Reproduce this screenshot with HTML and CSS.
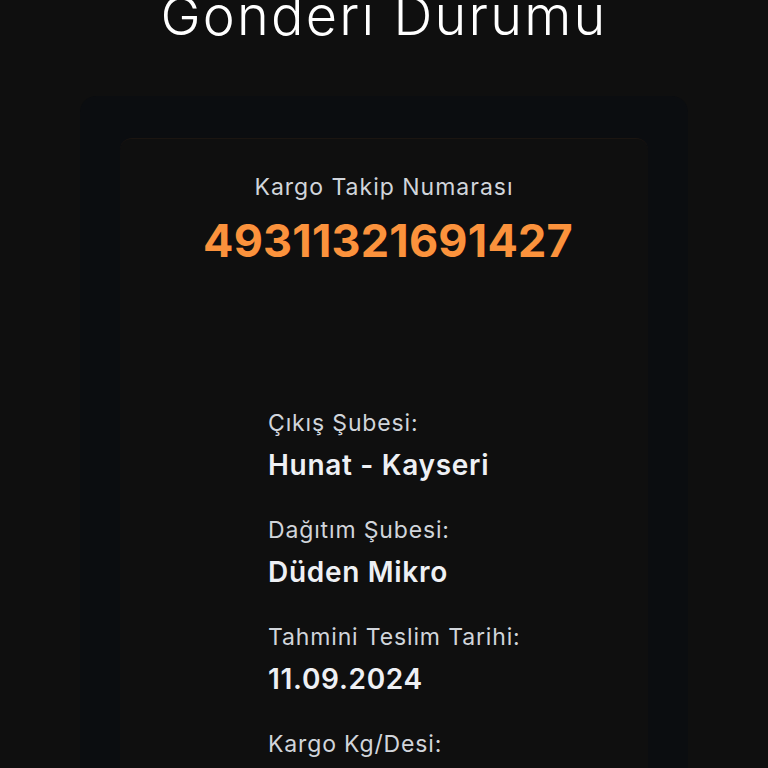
FILE: index.html
```html
<!DOCTYPE html>
<html lang="tr">
<head>
    <meta charset="UTF-8">
    <meta name="viewport" content="width=device-width, initial-scale=1.0">
    <title>Gönderi Durumu</title>
    <link rel="stylesheet" href="styles.css">
</head>
<body>
    <h1 class="page-title">Gönderi Durumu</h1>

    <div class="status-card">
        <div class="status-inner">
            <div class="tracking">
                <div class="tracking-label">Kargo Takip Numarası</div>
                <div class="tracking-number">49311321691427</div>
            </div>

            <div class="details">
                <div class="detail">
                    <span class="detail-label">Çıkış Şubesi:</span>
                    <span class="detail-value">Hunat - Kayseri</span>
                </div>
                <div class="detail">
                    <span class="detail-label">Dağıtım Şubesi:</span>
                    <span class="detail-value">Düden Mikro</span>
                </div>
                <div class="detail">
                    <span class="detail-label">Tahmini Teslim Tarihi:</span>
                    <span class="detail-value">11.09.2024</span>
                </div>
                <div class="detail">
                    <span class="detail-label">Kargo Kg/Desi:</span>
                    <span class="detail-value">2</span>
                </div>
            </div>
        </div>
    </div>
</body>
</html>
```

FILE: styles.css
```css
body {
    font-family: Inter, "Noto Sans", sans-serif;
    background-color: #0f0f0f;
    color: #f3f4f6;
    margin: 0;
    overflow: hidden;
}
.page-title {
    margin: -12px 0 0;
    font-size: 54px;
    line-height: 56px;
    font-weight: 300;
    letter-spacing: 2.2px;
    color: #ffffff;
    text-align: center;
}
.status-card {
    margin: 52px 80px 0;
    padding: 42px 40px 0;
    background-color: #0b0d10;
    border-radius: 16px 16px 0 0;
}
.status-inner {
    background-color: #0f0f0f;
    border-top: 1px solid rgba(251, 146, 60, 0.05);
    border-radius: 12px 12px 0 0;
    padding: 34px 0 40px;
}
.tracking {
    text-align: center;
}
.tracking-label {
    font-size: 23px;
    line-height: 28px;
    letter-spacing: 1px;
    color: #d1d5db;
}
.tracking-number {
    margin-top: 14px;
    padding-left: 8px;
    font-size: 45px;
    line-height: 52px;
    font-weight: 700;
    letter-spacing: 0.2px;
    color: #fb923c;
}
.details {
    display: flex;
    flex-direction: column;
    gap: 34px;
    margin-top: 142px;
    padding-left: 148px;
}
.detail {
    display: flex;
    flex-direction: column;
    gap: 11px;
}
.detail-label {
    font-size: 23px;
    line-height: 28px;
    letter-spacing: 0.85px;
    color: #d1d5db;
}
.detail-value {
    font-size: 28px;
    line-height: 34px;
    font-weight: 600;
    letter-spacing: 0.7px;
    color: #eef0f4;
}
```
